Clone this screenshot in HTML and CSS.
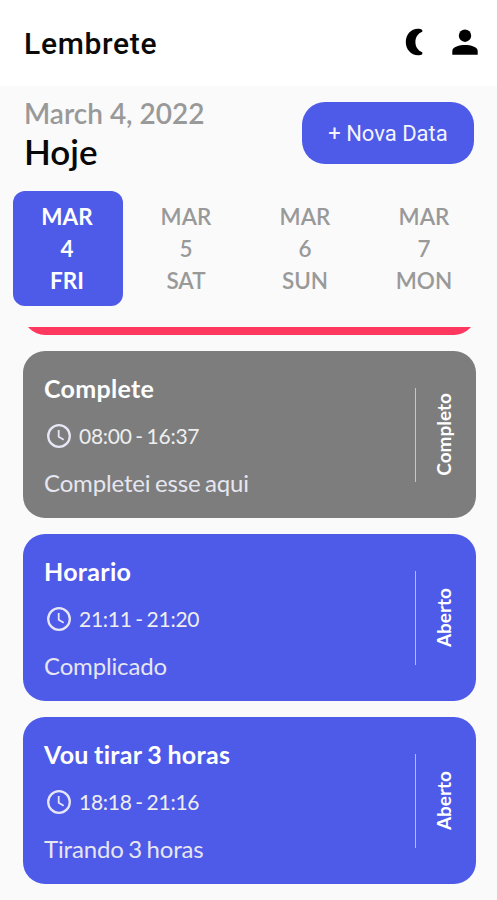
FILE: index.html
```html
<!DOCTYPE html>
<html lang="pt-BR">
<head>
<meta charset="utf-8">
<title>Lembrete</title>
<link rel="stylesheet" href="styles.css">
</head>
<body>
<header class="appbar">
  <h1 class="appbar-title">Lembrete</h1>
  <svg class="icon moon" viewBox="0 0 18 28"><path d="M17.300 2.100C16.400 1 14.800.8 13 .8 6 .8.8 6.600.8 14S6 27.200 13 27.200c1.800 0 3.400-.2 4.300-1.300v-1.600C13 22.700 10.400 18.800 10.400 14S13 5.300 17.300 3.700z"/></svg>
  <svg class="icon person" viewBox="0 0 26 26"><circle cx="13" cy="6.700" r="6.200"/><path d="M.3 25.700V22C.3 18 7.500 16.100 13 16.100S25.700 18 25.700 22v3.700z"/></svg>
</header>
<main>
  <section class="heading">
    <div>
      <p class="date">March 4, 2022</p>
      <h2 class="today">Hoje</h2>
    </div>
    <button class="add">+ Nova Data</button>
  </section>
  <nav class="days">
    <div class="day selected"><span>MAR</span><span>4</span><span>FRI</span></div>
    <div class="day"><span>MAR</span><span>5</span><span>SAT</span></div>
    <div class="day"><span>MAR</span><span>6</span><span>SUN</span></div>
    <div class="day"><span>MAR</span><span>7</span><span>MON</span></div>
  </nav>
  <section class="tasks">
    <article class="card scrolled"></article>
    <article class="card done">
      <div class="info">
        <h3>Complete</h3>
        <p class="time"><svg class="clock" viewBox="0 0 24 24"><circle cx="12" cy="12" r="10.800"/><path d="M11.700 6v6.700l5 3"/></svg><span>08:00 - 16:37</span></p>
        <p class="note">Completei esse aqui</p>
      </div>
      <div class="rule"></div>
      <div class="status">Completo</div>
    </article>
    <article class="card">
      <div class="info">
        <h3>Horario</h3>
        <p class="time"><svg class="clock" viewBox="0 0 24 24"><circle cx="12" cy="12" r="10.800"/><path d="M11.700 6v6.700l5 3"/></svg><span>21:11 - 21:20</span></p>
        <p class="note">Complicado</p>
      </div>
      <div class="rule"></div>
      <div class="status">Aberto</div>
    </article>
    <article class="card">
      <div class="info">
        <h3>Vou tirar 3 horas</h3>
        <p class="time"><svg class="clock" viewBox="0 0 24 24"><circle cx="12" cy="12" r="10.800"/><path d="M11.700 6v6.700l5 3"/></svg><span>18:18 - 21:16</span></p>
        <p class="note">Tirando 3 horas</p>
      </div>
      <div class="rule"></div>
      <div class="status">Aberto</div>
    </article>
  </section>
</main>
</body>
</html>
```
FILE: styles.css
```css
* { box-sizing: border-box; margin: 0; padding: 0; }
body {
  height: 900px;
  overflow: hidden;
  background: #fafafa;
  font-family: Lato, sans-serif;
}
.appbar {
  display: flex;
  align-items: center;
  height: 86px;
  padding: 0 19px 0 24px;
  background: #fff;
}
.appbar-title {
  flex: 1;
  padding-top: 1px;
  font: 500 30px/40px Roboto, sans-serif;
  letter-spacing: 0.7px;
  color: #0a0a0a;
}
.icon { fill: #000; }
.moon { width: 18px; height: 28px; margin: 0 29px 2px 0; }
.person { width: 26px; height: 26px; margin-bottom: 2px; }
.heading {
  display: flex;
  justify-content: space-between;
  align-items: flex-start;
  height: 105px;
  padding: 9px 23px 0 24px;
}
.date { font-size: 28px; font-weight: 600; line-height: 36px; color: #999; }
.today { font-size: 35px; font-weight: 600; line-height: 40px; color: #080808; }
.add {
  width: 172px;
  height: 62px;
  margin-top: 7px;
  padding-top: 1px;
  border: 0;
  border-radius: 23px;
  background: #4e5ae8;
  color: #f3f4ff;
  font: 400 22px/30px Roboto, sans-serif;
}
.days { display: flex; gap: 9px; height: 136px; padding-left: 13px; }
.day {
  display: flex;
  flex: 0 0 110px;
  flex-direction: column;
  height: 115px;
  padding: 10px 2px 0 0;
  border-radius: 12px;
  color: #999;
  font-size: 22.5px;
  font-weight: 600;
  line-height: 32px;
  text-align: center;
}
.selected { background: #4e5ae8; color: #fff; font-weight: 700; }
.tasks {
  display: flex;
  flex-direction: column;
  justify-content: flex-end;
  gap: 16px;
  height: 557px;
  padding: 0 21px 0 23px;
  overflow: hidden;
}
.card {
  display: flex;
  flex: 0 0 167px;
  align-items: center;
  padding: 0 20px 0 21px;
  border-radius: 22px;
  background: #4e5ae8;
  color: #fff;
}
.done { background: #7d7d7d; }
.scrolled { background: #ff3860; }
.info { flex: 1; padding-top: 2px; }
h3 {
  font-size: 25px;
  font-weight: 700;
  line-height: 30px;
  letter-spacing: 0.3px;
  word-spacing: -1px;
  font-variant-ligatures: none;
}
.time {
  display: flex;
  align-items: center;
  gap: 8px;
  margin: 18px 0 17px 3px;
  color: #eee;
  font-size: 21px;
  line-height: 30px;
  letter-spacing: -0.25px;
  word-spacing: -1.5px;
}
.clock { width: 24px; height: 24px; fill: none; stroke: #e6e6f6; stroke-width: 2.3; }
.clock path { stroke-width: 1.8; }
.note {
  color: #e6e6f0;
  font-size: 24px;
  line-height: 30px;
  letter-spacing: -0.15px;
  word-spacing: -1.5px;
}
.rule { width: 1px; height: 94px; background: rgba(238, 238, 238, 0.65); }
.status {
  width: 24px;
  margin-left: 16px;
  writing-mode: vertical-rl;
  transform: rotate(180deg);
  font-size: 19px;
  font-weight: 700;
  line-height: 24px;
}
```
